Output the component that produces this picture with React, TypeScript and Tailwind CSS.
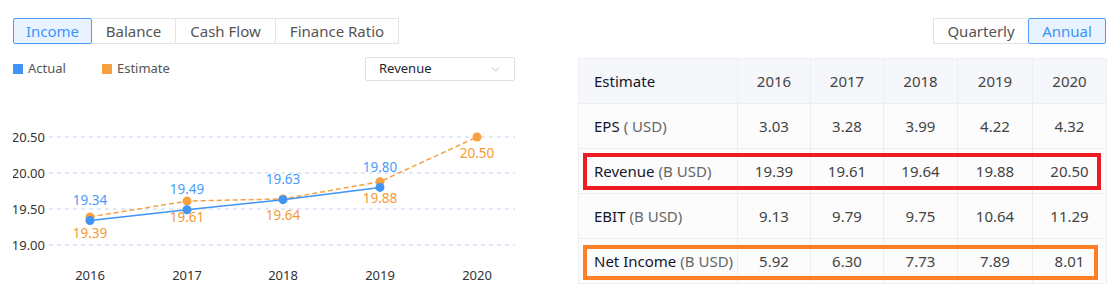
import React from 'react';
import { ChevronDown } from 'lucide-react';

const years = ['2016', '2017', '2018', '2019', '2020'];

const rows = [
  { name: 'EPS', unit: '( USD)', values: ['3.03', '3.28', '3.99', '4.22', '4.32'] },
  { name: 'Revenue', unit: '(B USD)', values: ['19.39', '19.61', '19.64', '19.88', '20.50'] },
  { name: 'EBIT', unit: '(B USD)', values: ['9.13', '9.79', '9.75', '10.64', '11.29'] },
  { name: 'Net Income', unit: '(B USD)', values: ['5.92', '6.30', '7.73', '7.89', '8.01'] },
];

const tabs = [
  { label: 'Income', w: 'w-[79px]' },
  { label: 'Balance', w: 'w-[84px]' },
  { label: 'Cash Flow', w: 'w-[100px]' },
  { label: 'Finance Ratio', w: 'w-[123px]' },
];

const xs = [90, 187, 283, 380, 477];
const actual = [19.34, 19.49, 19.63, 19.8];
const estimate = [19.39, 19.61, 19.64, 19.88, 20.5];
const yOf = (v: number) => 245 - (v - 19) * 72;

const Chart: React.FC = () => {
  const grid = [20.5, 20, 19.5, 19];
  const estPts = estimate.map((v, i) => `${xs[i]},${yOf(v)}`).join(' ');
  const actPts = actual.map((v, i) => `${xs[i]},${yOf(v)}`).join(' ');

  return (
    <svg width="502" height="215" viewBox="13 81 502 215" className="block">
      {grid.map(g => (
        <g key={g}>
          <line x1="49" x2="515" y1={yOf(g)} y2={yOf(g)} stroke="#c4d4ee" strokeWidth="1" strokeDasharray="4 4" />
          <text x="45" y={yOf(g) + 4.5} textAnchor="end" fontSize="13" fill="#333">
            {g.toFixed(2)}
          </text>
        </g>
      ))}

      {years.map((y, i) => (
        <text key={y} x={xs[i]} y="280" textAnchor="middle" fontSize="13" fill="#333">
          {y}
        </text>
      ))}

      {/* estimate series */}
      <polyline points={estPts} fill="none" stroke="#f7a040" strokeWidth="1.5" strokeDasharray="5 3" />
      {estimate.map((v, i) => (
        <g key={'e' + i}>
          <circle cx={xs[i]} cy={yOf(v)} r="4.5" fill="#f7a040" />
          <text x={xs[i]} y={yOf(v) + 21} textAnchor="middle" fontSize="13.5" fill="#f59a35">
            {v.toFixed(2)}
          </text>
        </g>
      ))}

      {/* actual series */}
      <polyline points={actPts} fill="none" stroke="#3f94f5" strokeWidth="1.5" />
      {actual.map((v, i) => (
        <g key={'a' + i}>
          <circle cx={xs[i]} cy={yOf(v)} r="4.5" fill="#3f94f5" />
          <text x={xs[i]} y={yOf(v) - 15.5} textAnchor="middle" fontSize="13.5" fill="#4a9cfb">
            {v.toFixed(2)}
          </text>
        </g>
      ))}
    </svg>
  );
};

const App: React.FC = () => {
  return (
    <div className="flex pt-[18px] pl-[13px] bg-white w-[1111px] h-[302px] font-['Noto_Sans',sans-serif]">
      {/* left: chart panel */}
      <div className="w-[502px] shrink-0">
        <div className="flex h-[26px]">
          {tabs.map((t, i) =>
            i === 0 ? (
              <div
                key={t.label}
                className={`${t.w} flex items-center justify-center border border-[#4a9dfc] bg-[#e8f3ff] text-[#3d93f8] text-[15px] rounded-[2px]`}
              >
                {t.label}
              </div>
            ) : (
              <div
                key={t.label}
                className={`${t.w} flex items-center justify-center border border-l-0 border-[#e0e3ea] text-[#555] text-[15px]`}
              >
                {t.label}
              </div>
            )
          )}
        </div>

        <div className="flex items-center justify-between mt-[13px] h-[24px]">
          <div className="flex items-center text-[13px] text-[#555]">
            <span className="w-[10px] h-[10px] bg-[#3f94f5]" />
            <span className="ml-[5px]">Actual</span>
            <span className="w-[10px] h-[10px] bg-[#f7a040] ml-[36px]" />
            <span className="ml-[5px]">Estimate</span>
          </div>
          <div className="w-[150px] h-[24px] border border-[#dcdfe6] rounded-[2px] flex items-center justify-between pl-[13px] pr-[12px] text-[13px] text-[#1f1f2e]">
            <span>Revenue</span>
            <ChevronDown size={13} strokeWidth={1.5} className="text-[#a8acb5]" />
          </div>
        </div>

        <Chart />
      </div>

      {/* right: table panel */}
      <div className="ml-[63px] w-[528px] shrink-0">
        <div className="flex justify-end h-[26px]">
          <div className="w-[95px] flex items-center justify-center border border-r-0 border-[#e0e3ea] text-[#555] text-[15px]">
            Quarterly
          </div>
          <div className="w-[78px] flex items-center justify-center border border-[#4a9dfc] bg-[#e8f3ff] text-[#3d93f8] text-[15px] rounded-[2px]">
            Annual
          </div>
        </div>

        <div className="relative mt-[14px]">
          <div className="grid grid-cols-[159px_73px_73px_74px_75px_74px] border-t border-l border-[#eceef2] text-[15px]">
            <div className="h-[45px] flex items-center pl-[15px] bg-[#f6f7fa] border-r border-b border-[#eceef2] text-[#14152a]">
              Estimate
            </div>
            {years.map(y => (
              <div
                key={y}
                className="h-[45px] flex items-center justify-center bg-[#f6f7fa] border-r border-b border-[#eceef2] text-[#444]"
              >
                {y}
              </div>
            ))}
            {rows.map(r => (
              <React.Fragment key={r.name}>
                <div className="h-[45px] flex items-center pl-[15px] bg-[#fcfcfd] border-r border-b border-[#eceef2] whitespace-nowrap">
                  <span className="text-[#14152a]">{r.name}</span>
                  <span className="ml-[4px] text-[#666]">{r.unit}</span>
                </div>
                {r.values.map((v, i) => (
                  <div
                    key={i}
                    className="h-[45px] flex items-center justify-center bg-[#fcfcfd] border-r border-b border-[#eceef2] text-[#444]"
                  >
                    {v}
                  </div>
                ))}
              </React.Fragment>
            ))}
          </div>

          {/* highlight boxes */}
          <div className="absolute left-[5px] top-[95px] w-[518px] h-[37px] border-4 border-[#ed1c24]" />
          <div className="absolute left-[5px] top-[187px] w-[515px] h-[35px] border-4 border-[#ff7f27]" />
        </div>
      </div>
    </div>
  );
};

export default App;
